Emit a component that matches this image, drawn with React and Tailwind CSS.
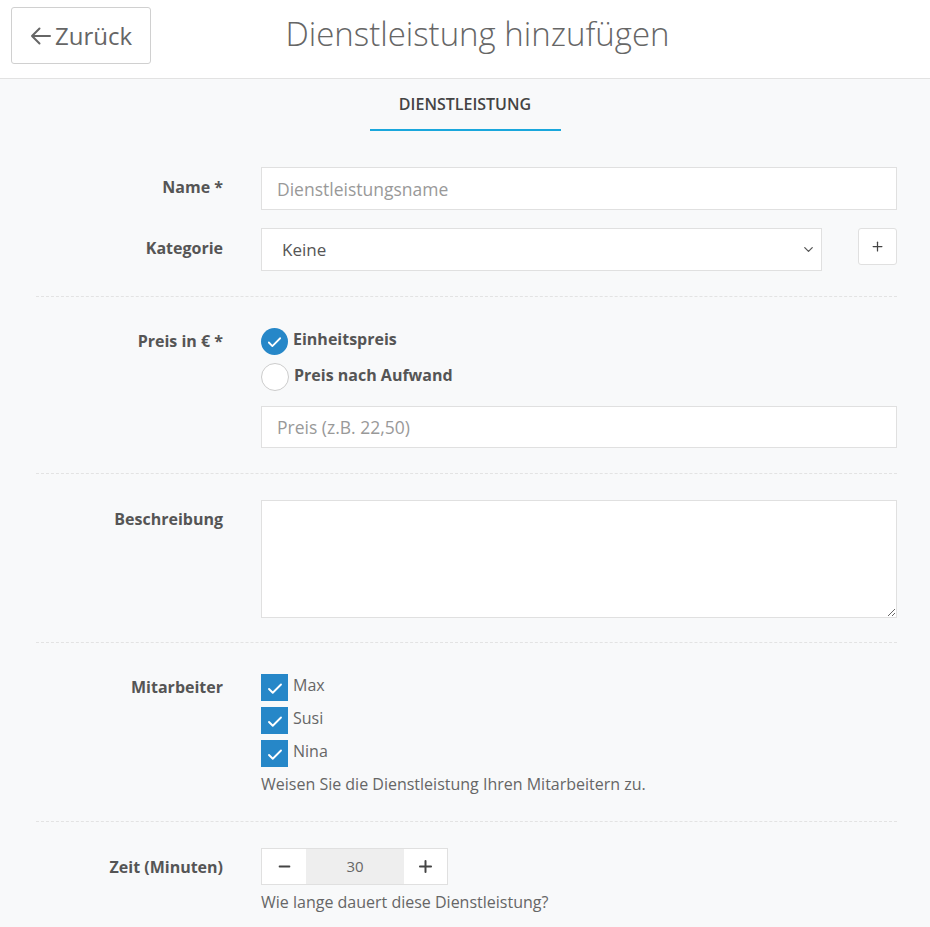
import { ChevronDown, Check, Plus, Minus } from 'lucide-react';

const Label = ({ children, className = '' }) => (
  <div className={`w-[187px] shrink-0 text-right font-bold text-[16px] text-[#555] ${className}`}>{children}</div>
);

const Row = ({ children, className = '' }) => (
  <div className={`flex gap-[38px] ${className}`}>{children}</div>
);

const Divider = () => <div className="border-t border-dashed border-[#e3e3e3]" />;

const Box = ({ label }) => (
  <label className="flex items-start gap-[5px] h-[33px]">
    <span className="w-[27px] h-[27px] bg-[#2687c8] flex items-center justify-center pt-[2px]">
      <Check className="w-[18px] h-[18px] text-white" strokeWidth={2.5} />
    </span>
    <span className="text-[16px] text-[#666] leading-[22px]">{label}</span>
  </label>
);

export default function App() {
  return (
    <div className="min-h-screen bg-[#f8f9fa] text-[#666]" style={{ fontFamily: '"Open Sans", sans-serif' }}>
      <header className="bg-white border-b border-[#e2e2e2] h-[79px] flex items-start pt-[7px] pl-[11px]">
        <button className="w-[140px] h-[57px] border border-[#d0d0d0] rounded-[3px] flex items-center justify-center gap-[4px] text-[24px] text-[#666] bg-white">
          <svg width="21" height="18" viewBox="0 0 21 18" fill="none" stroke="currentColor" strokeWidth="2" strokeLinecap="round" strokeLinejoin="round">
            <path d="M20 9H2M9.5 1.5 2 9l7.5 7.5" />
          </svg>
          Zurück
        </button>
        <h1 className="flex-1 text-center pr-[126px] text-[33px] leading-[57px] font-light text-[#666] -mt-[2px]">Dienstleistung hinzufügen</h1>
      </header>

      <div className="flex justify-center">
        <div className="w-[191px] pt-[14px] text-center">
          <div className="text-[16px] font-semibold text-[#444] leading-[22px] pb-[14px]">DIENSTLEISTUNG</div>
          <div className="h-[2px] bg-[#1aa7dc]" />
        </div>
      </div>

      <div className="pl-[36px] pr-[33px] pt-[36px]">
        <Row className="items-center">
          <Label className="-mt-[3px]">Name *</Label>
          <input className="flex-1 h-[43px] bg-white border border-[#e0e0e0] px-[15px] text-[17.5px] placeholder-[#999] outline-none" placeholder="Dienstleistungsname" />
        </Row>
        <Row className="items-center mt-[18px]">
          <Label className="-mt-[3px]">Kategorie</Label>
          <div className="flex-1 flex items-center gap-[36px]">
            <div className="relative flex-1">
              <select className="w-full h-[43px] bg-white border border-[#e0e0e0] pl-[20px] text-[17px] text-[#555] appearance-none outline-none">
                <option>Keine</option>
              </select>
              <ChevronDown className="absolute right-[6px] top-[14px] w-[15px] h-[15px] text-[#555] pointer-events-none" strokeWidth={2} />
            </div>
            <button className="w-[39px] h-[37px] -mt-[6px] bg-white border border-[#e0e0e0] rounded-[3px] flex items-center justify-center">
              <Plus className="w-[15px] h-[15px] text-[#444]" strokeWidth={2} />
            </button>
          </div>
        </Row>

        <div className="mt-[25px]"><Divider /></div>

        <Row className="mt-[31px]">
          <Label className="pt-[1px]">Preis in € *</Label>
          <div className="flex-1">
            <label className="flex items-start gap-[5px] h-[35px]">
              <span className="w-[27px] h-[27px] rounded-full bg-[#2687c8] flex items-center justify-center pt-[1px]">
                <Check className="w-[17px] h-[17px] text-white" strokeWidth={2.5} />
              </span>
              <span className="font-bold text-[16px] text-[#555] leading-[22px]">Einheitspreis</span>
            </label>
            <label className="flex items-start gap-[5px] h-[43px]">
              <span className="w-[28px] h-[28px] rounded-full bg-white border border-[#ccc]" />
              <span className="font-bold text-[16px] text-[#555] leading-[24px]">Preis nach Aufwand</span>
            </label>
            <input className="w-full h-[42px] bg-white border border-[#e0e0e0] px-[15px] text-[17.5px] placeholder-[#999] outline-none" placeholder="Preis (z.B. 22,50)" />
          </div>
        </Row>

        <div className="mt-[25px]"><Divider /></div>

        <Row className="mt-[26px]">
          <Label className="pt-[7px]">Beschreibung</Label>
          <textarea className="flex-1 h-[118px] bg-white border border-[#e0e0e0] px-[15px] py-[10px] text-[16px] outline-none" />
        </Row>

        <div className="mt-[24px]"><Divider /></div>

        <Row className="mt-[31px]">
          <Label className="pt-[1px]">Mitarbeiter</Label>
          <div className="flex-1">
            <Box label="Max" />
            <Box label="Susi" />
            <Box label="Nina" />
            <p className="text-[16px] text-[#666] leading-[22px]">Weisen Sie die Dienstleistung Ihren Mitarbeitern zu.</p>
          </div>
        </Row>

        <div className="mt-[26px]"><Divider /></div>

        <Row className="mt-[26px]">
          <Label className="pt-[7px]">Zeit (Minuten)</Label>
          <div className="flex-1">
            <div className="flex h-[37px] w-[187px] border border-[#e0e0e0] bg-white">
              <button className="w-[44px] flex items-center justify-center">
                <Minus className="w-[17px] h-[17px] text-[#444]" strokeWidth={2.5} />
              </button>
              <div className="w-[98px] bg-[#eeeeee] flex items-center justify-center text-[15px] text-[#666]">30</div>
              <button className="flex-1 flex items-center justify-center">
                <Plus className="w-[19px] h-[19px] text-[#444]" strokeWidth={2.5} />
              </button>
            </div>
            <p className="text-[16px] text-[#666] leading-[22px] mt-[6px]">Wie lange dauert diese Dienstleistung?</p>
          </div>
        </Row>
      </div>
    </div>
  );
}
